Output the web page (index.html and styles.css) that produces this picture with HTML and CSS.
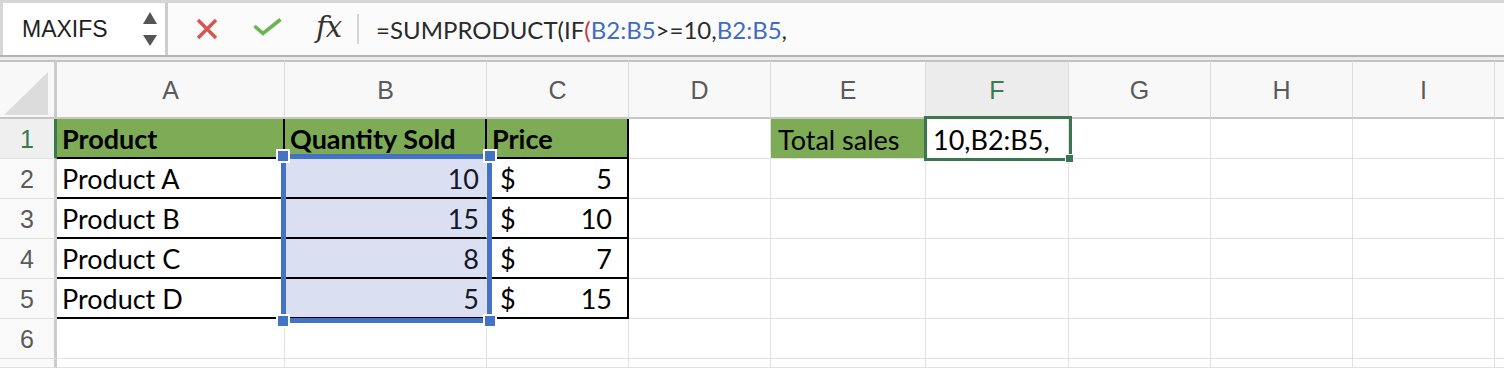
FILE: index.html
```html
<!DOCTYPE html>
<html lang="en">
<head>
    <meta charset="UTF-8">
    <title>MAXIFS - Sheet</title>
    <link rel="stylesheet" href="styles.css">
</head>
<body>
    <div class="toolbar">
        <div class="namebox">
            <span class="name">MAXIFS</span>
            <span class="spin"><i class="up"></i><i class="down"></i></span>
        </div>
        <div class="fbar">
            <div class="fbtns">
                <svg class="ic-x" width="22" height="22" viewBox="0 0 22 22">
                    <path d="M2 2 L20 20 M20 2 L2 20" stroke="#d9534f" stroke-width="3.4" fill="none"/>
                </svg>
                <svg class="ic-ok" width="29" height="18" viewBox="0 0 29 18">
                    <path d="M1.5 8 L10 15.5 L27.5 1.5" stroke="#6ab551" stroke-width="3.6" fill="none"/>
                </svg>
                <span class="fx">fx</span>
            </div>
            <div class="formula">=SUMPRODUCT(IF<span class="paren">(</span><span class="ref">B2:B5</span>&gt;=10,<span class="ref">B2:B5</span>,</div>
        </div>
    </div>
    <div class="gap"></div>

    <div class="sheet">
        <!-- column headers -->
        <div class="ch corner"><i class="tri"></i></div>
        <div class="ch">A</div>
        <div class="ch">B</div>
        <div class="ch">C</div>
        <div class="ch">D</div>
        <div class="ch">E</div>
        <div class="ch on">F</div>
        <div class="ch">G</div>
        <div class="ch">H</div>
        <div class="ch">I</div>
        <div class="ch"></div>

        <!-- row 1 -->
        <div class="rh on">1</div>
        <div class="c tb hd vr">Product</div>
        <div class="c tb hd vr">Quantity Sold</div>
        <div class="c tb hd vr">Price</div>
        <div class="c"></div>
        <div class="c green">Total sales</div>
        <div class="c active">10,B2:B5,</div>
        <div class="c"></div>
        <div class="c"></div>
        <div class="c"></div>
        <div class="c"></div>

        <!-- row 2 -->
        <div class="rh">2</div>
        <div class="c tb">Product A</div>
        <div class="c tb num hl">10</div>
        <div class="c tb acc vr"><span>$</span><span>5</span></div>
        <div class="c"></div>
        <div class="c"></div>
        <div class="c"></div>
        <div class="c"></div>
        <div class="c"></div>
        <div class="c"></div>
        <div class="c"></div>

        <!-- row 3 -->
        <div class="rh">3</div>
        <div class="c tb">Product B</div>
        <div class="c tb num hl">15</div>
        <div class="c tb acc vr"><span>$</span><span>10</span></div>
        <div class="c"></div>
        <div class="c"></div>
        <div class="c"></div>
        <div class="c"></div>
        <div class="c"></div>
        <div class="c"></div>
        <div class="c"></div>

        <!-- row 4 -->
        <div class="rh">4</div>
        <div class="c tb">Product C</div>
        <div class="c tb num hl">8</div>
        <div class="c tb acc vr"><span>$</span><span>7</span></div>
        <div class="c"></div>
        <div class="c"></div>
        <div class="c"></div>
        <div class="c"></div>
        <div class="c"></div>
        <div class="c"></div>
        <div class="c"></div>

        <!-- row 5 -->
        <div class="rh">5</div>
        <div class="c tb">Product D</div>
        <div class="c tb num hl">5</div>
        <div class="c tb acc vr"><span>$</span><span>15</span></div>
        <div class="c"></div>
        <div class="c"></div>
        <div class="c"></div>
        <div class="c"></div>
        <div class="c"></div>
        <div class="c"></div>
        <div class="c"></div>

        <!-- row 6 -->
        <div class="rh">6</div>
        <div class="c"></div>
        <div class="c"></div>
        <div class="c"></div>
        <div class="c"></div>
        <div class="c"></div>
        <div class="c"></div>
        <div class="c"></div>
        <div class="c"></div>
        <div class="c"></div>
        <div class="c"></div>

        <!-- row 7 (cut off) -->
        <div class="rh"></div>
        <div class="c"></div>
        <div class="c"></div>
        <div class="c"></div>
        <div class="c"></div>
        <div class="c"></div>
        <div class="c"></div>
        <div class="c"></div>
        <div class="c"></div>
        <div class="c"></div>
        <div class="c"></div>

        <!-- overlays: range being referenced + active cell -->
        <div class="sel">
            <i class="hd-tl"></i><i class="hd-tr"></i><i class="hd-bl"></i><i class="hd-br"></i>
        </div>
        <div class="act"><i class="fill"></i></div>
    </div>
</body>
</html>
```

FILE: styles.css
```css
body {
    margin: 0;
    background: #fff;
    font-family: 'Liberation Sans', Arial, sans-serif;
    overflow: hidden;
}

.toolbar {
    display: flex;
    height: 57px;
    box-sizing: border-box;
    border-top: 3px solid #d6d6d6;
    border-bottom: 2px solid #b3b3b3;
    background: #fbfbfb;
}

.gap {
    height: 3px;
    background: #ececec;
}

.namebox {
    width: 168px;
    box-sizing: border-box;
    border-left: 3px solid #d6d6d6;
    border-right: 3px solid #cdcdcd;
    background: #fff;
    display: flex;
    align-items: center;
    justify-content: space-between;
    padding: 0 8px 0 19px;
}

.name {
    font-size: 23px;
    color: #1f1f1f;
}

.spin {
    display: flex;
    flex-direction: column;
    gap: 11px;
}

.spin i {
    width: 0;
    height: 0;
    border-left: 7px solid transparent;
    border-right: 7px solid transparent;
}

.spin .up {
    border-bottom: 12px solid #555;
}

.spin .down {
    border-top: 11px solid #555;
}

.fbar {
    flex: 1;
    display: flex;
    align-items: center;
}

.fbtns {
    display: flex;
    align-items: center;
    height: 30px;
    padding-left: 28px;
    padding-right: 16px;
    border-right: 2px solid #d5d5d5;
}

.ic-x {
    margin-right: 35px;
}

.ic-ok {
    margin-right: 34px;
    margin-top: -4px;
}

.fx {
    font-family: 'DejaVu Serif', 'Liberation Serif', serif;
    font-style: italic;
    font-size: 29px;
    color: #333;
    margin-top: -4px;
    letter-spacing: -1px;
}

.formula {
    font-family: Lato, sans-serif;
    font-size: 24px;
    color: #2b2b2b;
    padding-left: 17px;
}

.formula .ref {
    color: #3f6cc4;
}

.formula .paren {
    color: #c8383b;
}

/* grid */
.sheet {
    position: relative;
    display: grid;
    grid-template-columns: 57px 228px 202px 142px 142px 155px 143px 142px 142px 142px 1fr;
    grid-template-rows: 59px repeat(6, 40px) 9px;
}

.ch {
    box-sizing: border-box;
    background: #f8f8f8;
    border-top: 2px solid #c2c2c2;
    border-right: 1px solid #dcdcdc;
    border-bottom: 2px solid #c6c6c6;
    display: flex;
    align-items: center;
    justify-content: center;
    font-size: 25px;
    color: #5a5a5a;
    padding-top: 2px;
}

.ch.on {
    background: #ececec;
    color: #3a7a4e;
}

.corner {
    position: relative;
    border-right: 3px solid #cbcbcb;
}

.tri {
    width: 0;
    height: 0;
    border-left: 44px solid transparent;
    border-bottom: 43px solid #dcdcdc;
    margin: 6px 0 0 -2px;
}

.rh {
    box-sizing: border-box;
    background: #f9f9f9;
    border-right: 3px solid #cbcbcb;
    border-bottom: 1px solid #e0e0e0;
    display: flex;
    align-items: center;
    justify-content: center;
    font-size: 25px;
    color: #5a5a5a;
    padding-top: 2px;
}

.rh.on {
    color: #3a7a4e;
    background: #efefef;
    border-right-color: #3a7a4e;
}

.c {
    box-sizing: border-box;
    border-right: 1px solid #e2e2e2;
    border-bottom: 1px solid #e2e2e2;
    font-family: Lato, sans-serif;
    font-size: 27px;
    color: #000;
    display: flex;
    align-items: flex-end;
    padding: 0 6px 5px 5px;
    white-space: nowrap;
    line-height: 1;
}

.c.tb {
    border-bottom: 2px solid #000;
}

.c.vr {
    border-right: 2px solid #000;
}

.c.hd {
    background: #7eab56;
    font-weight: 700;
}

.c.green {
    background: #7eab56;
    padding-left: 7px;
}

.c.active {
    padding-left: 7px;
}

.c.num {
    justify-content: flex-end;
    padding-right: 7px;
}

.c.hl {
    background: #dae0f2;
    color: #15172a;
}

.c.acc {
    justify-content: space-between;
    padding-left: 13px;
    padding-right: 15px;
}

/* overlays */
.sel {
    position: absolute;
    grid-column: 3 / 4;
    grid-row: 3 / 7;
    top: -5px;
    right: -5px;
    bottom: -4px;
    left: -4px;
    border: 5px solid #4472c4;
    pointer-events: none;
}

.sel i {
    position: absolute;
    width: 10px;
    height: 10px;
    background: #4472c4;
    border: 2px solid #fff;
}

.sel .hd-tl { top: -10px; left: -10px; }
.sel .hd-tr { top: -10px; right: -10px; }
.sel .hd-bl { bottom: -10px; left: -10px; }
.sel .hd-br { bottom: -10px; right: -10px; }

.act {
    position: absolute;
    grid-column: 7 / 8;
    grid-row: 2 / 3;
    top: -3px;
    right: -3px;
    bottom: -2px;
    left: -2px;
    border: 3px solid #3c7650;
    pointer-events: none;
}

.act .fill {
    position: absolute;
    right: -5px;
    bottom: -5px;
    width: 7px;
    height: 7px;
    background: #3c7650;
    border: 1px solid #fff;
}
```
